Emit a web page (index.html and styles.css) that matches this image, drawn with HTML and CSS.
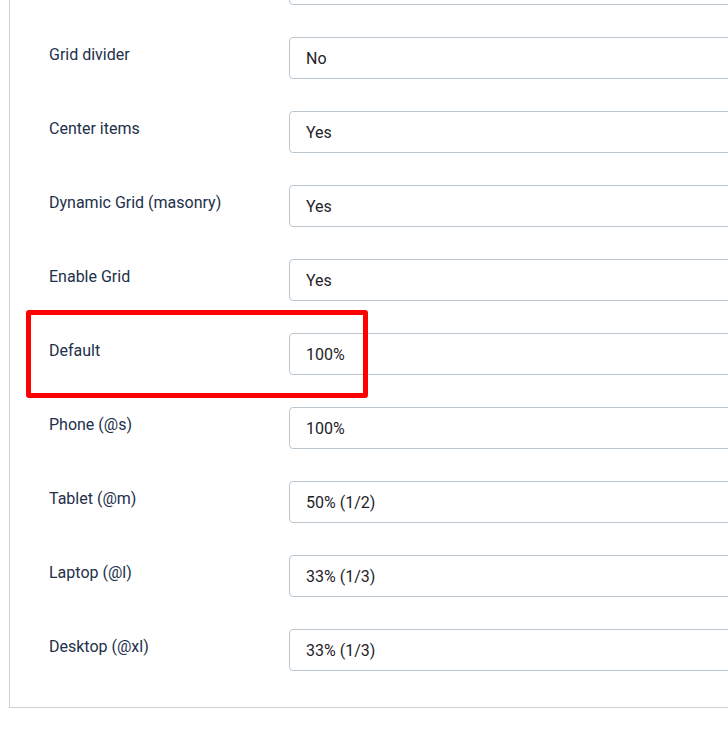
FILE: index.html
```html
<!DOCTYPE html>
<html>
<head>
<meta charset="utf-8">
<link rel="stylesheet" href="styles.css">
</head>
<body>
<div class="panel">
  <div class="row"><div class="label"></div><div class="field"></div></div>
  <div class="row"><div class="label">Grid divider</div><div class="field">No</div></div>
  <div class="row"><div class="label">Center items</div><div class="field">Yes</div></div>
  <div class="row"><div class="label">Dynamic Grid (masonry)</div><div class="field">Yes</div></div>
  <div class="row"><div class="label">Enable Grid</div><div class="field">Yes</div></div>
  <div class="row"><div class="label">Default</div><div class="field">100%</div></div>
  <div class="row"><div class="label">Phone (@s)</div><div class="field">100%</div></div>
  <div class="row"><div class="label">Tablet (@m)</div><div class="field">50% (1/2)</div></div>
  <div class="row"><div class="label">Laptop (@l)</div><div class="field">33% (1/3)</div></div>
  <div class="row"><div class="label">Desktop (@xl)</div><div class="field">33% (1/3)</div></div>
</div>
<div class="highlight"></div>
</body>
</html>
```
FILE: styles.css
```css
html, body {
  margin: 0;
  padding: 0;
  overflow: hidden;
  background: #fff;
  width: 728px;
  height: 740px;
}
body {
  position: relative;
  font-family: Roboto, "Liberation Sans", sans-serif;
  font-size: 16px;
  line-height: 24px;
}
.panel {
  margin-left: 9px;
  margin-top: -37px;
  width: 719px;
  box-sizing: border-box;
  overflow: hidden;
  border-left: 1px solid #c9d1d9;
  border-bottom: 1px solid #c9d1d9;
  padding: 0 0 36px 39px;
  display: flex;
  flex-direction: column;
  gap: 32px;
}
.row {
  display: grid;
  grid-template-columns: 240px 500px;
}
.label {
  padding-top: 6px;
  color: #22304a;
}
.field {
  height: 42px;
  box-sizing: border-box;
  border: 1px solid #bcc6cf;
  border-radius: 4px;
  padding: 9px 16px 7px;
  color: #1f2328;
  background: #fff;
}
.highlight {
  position: absolute;
  left: 26px;
  top: 310px;
  width: 342px;
  height: 88px;
  box-sizing: border-box;
  border: 5px solid #f00;
  border-radius: 3px;
}
```
